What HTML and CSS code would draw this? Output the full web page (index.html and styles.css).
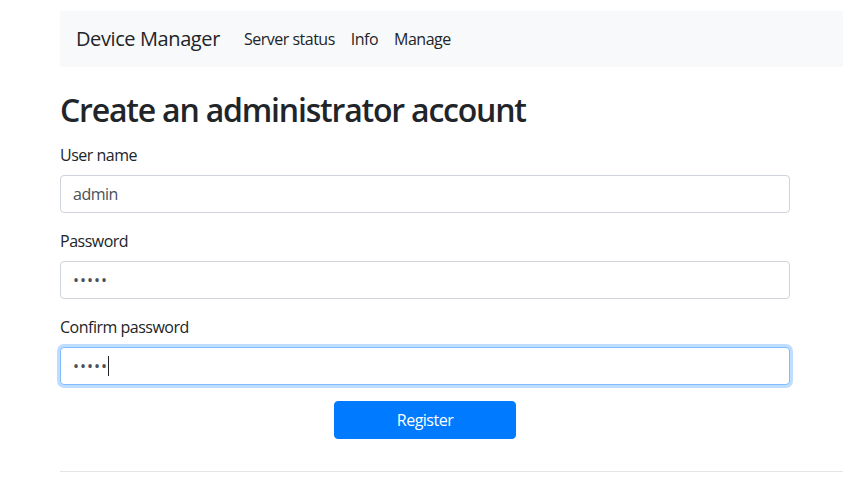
FILE: index.html
```html
<!DOCTYPE html>
<html lang="en">
<head>
<meta charset="utf-8">
<title>Device Manager</title>
<link rel="stylesheet" href="styles.css">
</head>
<body>
<div class="page">
  <nav class="navbar">
    <span class="brand">Device Manager</span>
    <ul class="nav">
      <li><a class="nav-link" href="#">Server status</a></li>
      <li><a class="nav-link" href="#">Info</a></li>
      <li><a class="nav-link" href="#">Manage</a></li>
    </ul>
  </nav>
  <main class="content">
    <h1 class="title">Create an administrator account</h1>
    <form class="form">
      <div class="form-group">
        <label class="label" for="user">User name</label>
        <input class="control" id="user" type="text" value="admin">
      </div>
      <div class="form-group">
        <label class="label" for="pw">Password</label>
        <input class="control secret" id="pw" type="password" value="admin">
      </div>
      <div class="form-group">
        <label class="label" for="pw2">Confirm password</label>
        <div class="control focused"><span class="dots">•••••</span><span class="caret"></span></div>
      </div>
      <div class="actions">
        <button class="btn" type="button">Register</button>
      </div>
    </form>
    <hr class="rule">
  </main>
</div>
</body>
</html>
```
FILE: styles.css
```css
* { box-sizing: border-box; }
html, body { margin: 0; padding: 0; overflow: hidden; }
body {
  font-family: "Open Sans", "Noto Sans", sans-serif;
  font-size: 16px;
  line-height: 1.5;
  letter-spacing: -0.5px;
  color: #212529;
  background: #fff;
}
.page {
  padding: 11px 0 0 60px;
}
.navbar {
  display: flex;
  align-items: center;
  background: #f8f9fa;
  padding: 8px 16px;
  height: 56px;
  width: 800px;
}
.brand {
  font-size: 20px;
  line-height: 30px;
  margin-right: 16px;
  letter-spacing: -0.4px;
  color: #212529;
}
.nav {
  display: flex;
  list-style: none;
  margin: 0;
  padding: 0;
}
.nav-link {
  display: block;
  padding: 8px;
  color: #212529;
  text-decoration: none;
  font-size: 16px;
}
.content { width: 800px; }
.title {
  font-size: 32px;
  font-weight: 600;
  line-height: 1.2;
  letter-spacing: -1.2px;
  margin: 24px 0 14px;
}
.form { width: 730px; }
.form-group { margin-bottom: 16px; }
.label {
  display: block;
  margin-bottom: 8px;
}
.control {
  display: block;
  width: 100%;
  height: 38px;
  padding: 6px 12px;
  font: inherit;
  letter-spacing: -0.5px;
  color: #495057;
  background: #fff;
  border: 1px solid #ced4da;
  border-radius: 4px;
}
.control.secret { letter-spacing: 1px; }
.control.focused {
  display: flex;
  align-items: center;
  border-color: #80bdff;
  box-shadow: 0 0 0 3px rgba(0, 123, 255, 0.25);
}
.dots { letter-spacing: 1px; font-size: 16px; color: #495057; }
.caret {
  display: inline-block;
  width: 1px;
  height: 20px;
  background: #212529;
}
.actions {
  display: flex;
  justify-content: center;
}
.btn {
  width: 182px;
  height: 38px;
  font: inherit;
  letter-spacing: -0.5px;
  color: #fff;
  background: #007bff;
  border: 1px solid #007bff;
  border-radius: 4px;
}
.rule {
  margin: 32px 0 0;
  border: 0;
  border-top: 1px solid rgba(0, 0, 0, 0.1);
  width: 800px;
}
```
